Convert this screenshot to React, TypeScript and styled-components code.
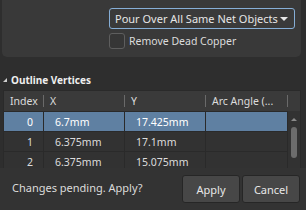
import React from "react";
import styled, { createGlobalStyle } from "styled-components";

type Vertex = { index: number; x: string; y: string; arc: string };

const vertices: Vertex[] = [
  { index: 0, x: "6.7mm", y: "17.425mm", arc: "" },
  { index: 1, x: "6.375mm", y: "17.1mm", arc: "" },
  { index: 2, x: "6.375mm", y: "15.075mm", arc: "" },
];

const GlobalStyle = createGlobalStyle`
  html, body {
    margin: 0;
    padding: 0;
    background: #2e2e2e;
  }
  body {
    font-family: "Noto Sans", "Open Sans", sans-serif;
    font-size: 10.5px;
    color: #dcdcdc;
  }
`;

const Frame = styled.div`
  width: 306px;
  height: 210px;
  overflow: hidden;
  background: #2e2e2e;
  display: flex;
  flex-direction: column;
`;

const OptionsPanel = styled.section`
  margin-left: 2px;
  width: 299px;
  height: 57px;
  flex-shrink: 0;
  box-sizing: border-box;
  background: #393939;
  border-radius: 0 0 5px 5px;
  padding: 8px 0 0 107px;
  display: flex;
  flex-direction: column;
  align-items: flex-start;
`;

const Select = styled.div`
  width: 186px;
  height: 21px;
  box-sizing: border-box;
  border: 1px solid #86aed6;
  border-radius: 3px;
  background: #3a3a3a;
  display: flex;
  align-items: center;
  justify-content: space-between;
  padding: 0 6px 0 5px;
  color: #e6e6e6;
  font-size: 11px;
  white-space: nowrap;
`;

const Caret = styled.span`
  width: 0;
  height: 0;
  border-left: 4px solid transparent;
  border-right: 4px solid transparent;
  border-top: 4px solid #e8e8e8;
`;

const CheckRow = styled.label`
  margin-top: 4px;
  display: flex;
  align-items: center;
  gap: 4px;
  color: #dcdcdc;
  font-size: 10.5px;
`;

const Box = styled.span`
  width: 16px;
  height: 16px;
  box-sizing: border-box;
  border: 1px solid #5e5e5e;
  border-radius: 3px;
  background: #363636;
`;

const SectionTitle = styled.h3`
  margin: 12px 0 0 3px;
  height: 21px;
  flex-shrink: 0;
  display: flex;
  align-items: center;
  gap: 4px;
  font-size: 10px;
  font-weight: 700;
  color: #eeeeee;
`;

const Expander = styled.span`
  width: 0;
  height: 0;
  border-left: 4px solid transparent;
  border-bottom: 4px solid #cfcfcf;
`;

const Table = styled.div`
  margin-left: 3px;
  width: 298px;
  height: 78px;
  flex-shrink: 0;
  box-sizing: border-box;
  border: 1px solid #2a2a2a;
  border-bottom: none;
  overflow: hidden;
  display: grid;
  grid-template-columns: 40px 81px 81px 82px 1fr;
  grid-template-rows: 20px repeat(3, 20px);
  background: #323232;
`;

const HeadCell = styled.div`
  background: #3a3a3a;
  display: flex;
  align-items: center;
  padding-left: 6px;
  position: relative;
  color: #dcdcdc;
  white-space: nowrap;
  &::after {
    content: "";
    position: absolute;
    right: 0;
    top: 4px;
    height: 12px;
    width: 1px;
    background: #6a6a6a;
  }
`;

const HeadFiller = styled.div`
  background: #3a3a3a;
`;

const Cell = styled.div<{ $selected?: boolean; $right?: boolean }>`
  background: ${(p) => (p.$selected ? "#5f80a2" : "#323232")};
  color: ${(p) => (p.$selected ? "#ffffff" : "#dcdcdc")};
  border-right: 1px solid #2a2a2a;
  border-top: 1px solid #2a2a2a;
  box-sizing: border-box;
  display: flex;
  align-items: center;
  justify-content: ${(p) => (p.$right ? "flex-end" : "flex-start")};
  padding: ${(p) => (p.$right ? "0 10px 0 0" : "0 0 0 11px")};
  white-space: nowrap;
`;

const ScrollTrack = styled.div`
  grid-column: 5;
  grid-row: 2 / span 3;
  background: #323232;
  display: flex;
  flex-direction: column;
  align-items: center;
  padding-top: 7px;
  gap: 6px;
`;

const ScrollUp = styled.span`
  width: 0;
  height: 0;
  border-left: 3px solid transparent;
  border-right: 3px solid transparent;
  border-bottom: 3px solid #8a8a8a;
`;

const Thumb = styled.span`
  width: 6px;
  height: 31px;
  border-radius: 3px;
  background: #6c6c6c;
`;

const Footer = styled.footer`
  flex: 1;
  display: flex;
  align-items: center;
  padding: 0 6px 4px 12px;
  gap: 2px;
  background: #333333;
`;

const Status = styled.span`
  flex: 1;
  color: #dcdcdc;
  font-size: 11px;
`;

const Button = styled.button`
  width: 58px;
  height: 28px;
  margin-top: 4px;
  box-sizing: border-box;
  border: 1px solid #262626;
  border-radius: 3px;
  background: #474747;
  color: #e8e8e8;
  font-family: inherit;
  font-size: 11px;
  padding: 0;
`;

export default function App() {
  return (
    <>
      <GlobalStyle />
      <Frame>
        <OptionsPanel>
          <Select>
            <span>Pour Over All Same Net Objects</span>
            <Caret />
          </Select>
          <CheckRow>
            <Box />
            Remove Dead Copper
          </CheckRow>
        </OptionsPanel>

        <SectionTitle>
          <Expander />
          Outline Vertices
        </SectionTitle>

        <Table>
          <HeadCell>Index</HeadCell>
          <HeadCell>X</HeadCell>
          <HeadCell>Y</HeadCell>
          <HeadCell>Arc Angle (...</HeadCell>
          <HeadFiller />
          {vertices.map((v) => (
            <React.Fragment key={v.index}>
              <Cell $selected={v.index === 0} $right>
                {v.index}
              </Cell>
              <Cell $selected={v.index === 0}>{v.x}</Cell>
              <Cell $selected={v.index === 0}>{v.y}</Cell>
              <Cell $selected={v.index === 0}>{v.arc}</Cell>
            </React.Fragment>
          ))}
          <ScrollTrack>
            <ScrollUp />
            <Thumb />
          </ScrollTrack>
        </Table>

        <Footer>
          <Status>Changes pending. Apply?</Status>
          <Button>Apply</Button>
          <Button>Cancel</Button>
        </Footer>
      </Frame>
    </>
  );
}
